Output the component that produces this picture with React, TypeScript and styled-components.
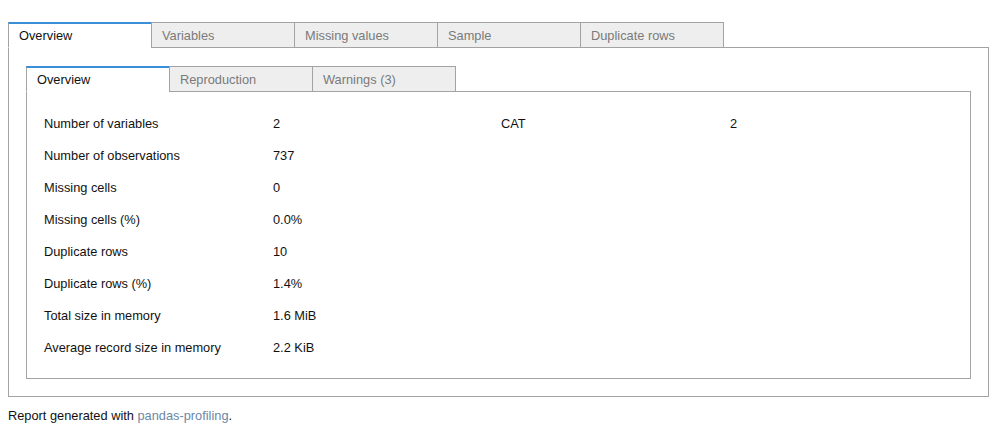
import React from "react";
import styled, { createGlobalStyle } from "styled-components";

const GlobalStyle = createGlobalStyle`
  html, body {
    margin: 0;
    padding: 0;
    background: #ffffff;
  }
  body {
    font-family: "Liberation Sans", Arial, sans-serif;
    font-size: 12.8px;
    color: #111111;
  }
`;

const Page = styled.div`
  padding: 22px 16px 0 8px;
  width: 981px;
`;

const TabBar = styled.div`
  display: flex;
  position: relative;
  z-index: 1;
  margin-bottom: -1px;
`;

const Tab = styled.div<{ $active?: boolean }>`
  box-sizing: border-box;
  width: 144px;
  height: 26px;
  padding: 0 10px;
  display: flex;
  align-items: center;
  border: 1px solid #a3a3a3;
  border-top: ${(p) => (p.$active ? "2px solid #3b8ed8" : "1px solid #a3a3a3")};
  border-bottom-color: ${(p) => (p.$active ? "#ffffff" : "#a3a3a3")};
  background: ${(p) => (p.$active ? "#ffffff" : "#eeeeee")};
  color: ${(p) => (p.$active ? "#111111" : "#7a7a7a")};
  margin-left: -1px;
  &:first-child {
    margin-left: 0;
  }
  padding-top: ${(p) => (p.$active ? "0" : "1px")};
  white-space: nowrap;
`;

const OuterPanel = styled.div`
  box-sizing: border-box;
  border: 1px solid #a3a3a3;
  padding: 18px 17px 17px 17px;
  height: 350px;
`;

const InnerPanel = styled.div`
  box-sizing: border-box;
  border: 1px solid #a3a3a3;
  height: 288px;
  padding: 15px 17px 0 17px;
`;

const StatsGrid = styled.div`
  display: grid;
  grid-template-columns: 229px 228px 229px 1fr;
  grid-auto-rows: 32px;
  align-items: center;
`;

const Cell = styled.div`
  white-space: nowrap;
`;

const Footer = styled.div`
  margin-top: 11px;
  color: #111111;
`;

const Link = styled.a`
  color: #6b87a6;
  text-decoration: none;
`;

const outerTabs = ["Overview", "Variables", "Missing values", "Sample", "Duplicate rows"];
const innerTabs = ["Overview", "Reproduction", "Warnings (3)"];

const rows: [string, string, string?, string?][] = [
  ["Number of variables", "2", "CAT", "2"],
  ["Number of observations", "737"],
  ["Missing cells", "0"],
  ["Missing cells (%)", "0.0%"],
  ["Duplicate rows", "10"],
  ["Duplicate rows (%)", "1.4%"],
  ["Total size in memory", "1.6 MiB"],
  ["Average record size in memory", "2.2 KiB"],
];

export default function App() {
  return (
    <Page>
      <GlobalStyle />
      <TabBar>
        {outerTabs.map((t, i) => (
          <Tab key={t} $active={i === 0}>
            {t}
          </Tab>
        ))}
      </TabBar>
      <OuterPanel>
        <TabBar>
          {innerTabs.map((t, i) => (
            <Tab key={t} $active={i === 0}>
              {t}
            </Tab>
          ))}
        </TabBar>
        <InnerPanel>
          <StatsGrid>
            {rows.map(([a, b, c, d]) => (
              <React.Fragment key={a}>
                <Cell>{a}</Cell>
                <Cell>{b}</Cell>
                <Cell>{c ?? ""}</Cell>
                <Cell>{d ?? ""}</Cell>
              </React.Fragment>
            ))}
          </StatsGrid>
        </InnerPanel>
      </OuterPanel>
      <Footer>
        Report generated with <Link href="#">pandas-profiling</Link>.
      </Footer>
    </Page>
  );
}
